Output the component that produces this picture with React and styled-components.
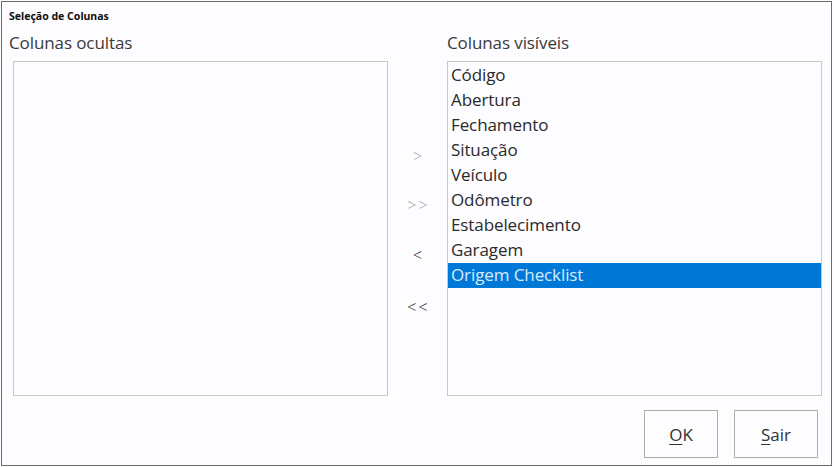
import React from "react";
import styled, { createGlobalStyle } from "styled-components";

const Global = createGlobalStyle`
  html, body { margin: 0; padding: 0; background: #fdfcff; }
  body { padding: 1px 0 0 1px; }
  * { box-sizing: border-box; }
`;

const Window = styled.div`
  width: 831px;
  height: 465px;
  border: 1px solid #6b6b6b;
  background: #fdfcff;
  font-family: "Open Sans", "Noto Sans", sans-serif;
  color: #222;
  display: flex;
  flex-direction: column;
`;

const Title = styled.div`
  font-family: "Noto Sans", "Open Sans", sans-serif;
  font-weight: 700;
  font-size: 10.5px;
  line-height: 14px;
  padding: 7px 0 0 7px;
  height: 22px;
  color: #111;
`;

const Body = styled.div`
  display: grid;
  grid-template-columns: 375px 59px 375px;
  grid-template-rows: 29px 335px;
  padding: 8px 0 0 11px;
`;

const Label = styled.div`
  font-size: 17px;
  font-weight: 400;
  line-height: 22px;
  color: #3a3a3a;
  margin-left: ${(p) => p.$ml || 0}px;
  letter-spacing: -0.1px;
`;

const ListBox = styled.div`
  border: 1px solid #c8c8c8;
  background: #fdfcff;
  padding: 1px 0 0 0;
  display: flex;
  flex-direction: column;
`;

const Item = styled.div`
  height: 25px;
  line-height: 24px;
  font-size: 17px;
  font-weight: 400;
  padding-left: 3px;
  letter-spacing: -0.1px;
  color: ${(p) => (p.$selected ? "#d9ebfb" : "#2a2a2a")};
  background: ${(p) => (p.$selected ? "#0078d7" : "transparent")};
`;

const Arrows = styled.div`
  display: flex;
  flex-direction: column;
  align-items: center;
  padding-top: 85px;
`;

const Arrow = styled.div`
  height: ${(p) => p.$h}px;
  font-size: 16px;
  font-weight: 300;
  line-height: 20px;
  letter-spacing: 2px;
  padding-left: 2px;
  color: ${(p) => (p.$disabled ? "#a8a8a8" : "#333")};
`;

const Footer = styled.div`
  display: flex;
  justify-content: flex-end;
  gap: 16px;
  padding: 14px 13px 0 0;
`;

const Button = styled.button`
  width: ${(p) => p.$w}px;
  height: 48px;
  border: 1px solid #adadad;
  background: #fdfcff;
  font-family: "Open Sans", "Noto Sans", sans-serif;
  font-size: 17px;
  font-weight: 400;
  color: #333;
  padding: 0;
  u { text-decoration-thickness: 1px; text-underline-offset: 3px; }
`;

const visible = [
  "Código",
  "Abertura",
  "Fechamento",
  "Situação",
  "Veículo",
  "Odômetro",
  "Estabelecimento",
  "Garagem",
  "Origem Checklist",
];

export default function App() {
  return (
    <>
      <Global />
      <Window>
        <Title>Seleção de Colunas</Title>
        <Body>
          <Label $ml={-4}>Colunas ocultas</Label>
          <div />
          <Label $ml={0}>Colunas visíveis</Label>
          <ListBox />
          <Arrows>
            <Arrow $h={49} $disabled>&gt;</Arrow>
            <Arrow $h={50} $disabled>&gt;&gt;</Arrow>
            <Arrow $h={52}>&lt;</Arrow>
            <Arrow $h={20}>&lt;&lt;</Arrow>
          </Arrows>
          <ListBox>
            {visible.map((v, i) => (
              <Item key={v} $selected={i === visible.length - 1}>
                {v}
              </Item>
            ))}
          </ListBox>
        </Body>
        <Footer>
          <Button $w={74}>
            <u>O</u>K
          </Button>
          <Button $w={84}>
            <u>S</u>air
          </Button>
        </Footer>
      </Window>
    </>
  );
}
